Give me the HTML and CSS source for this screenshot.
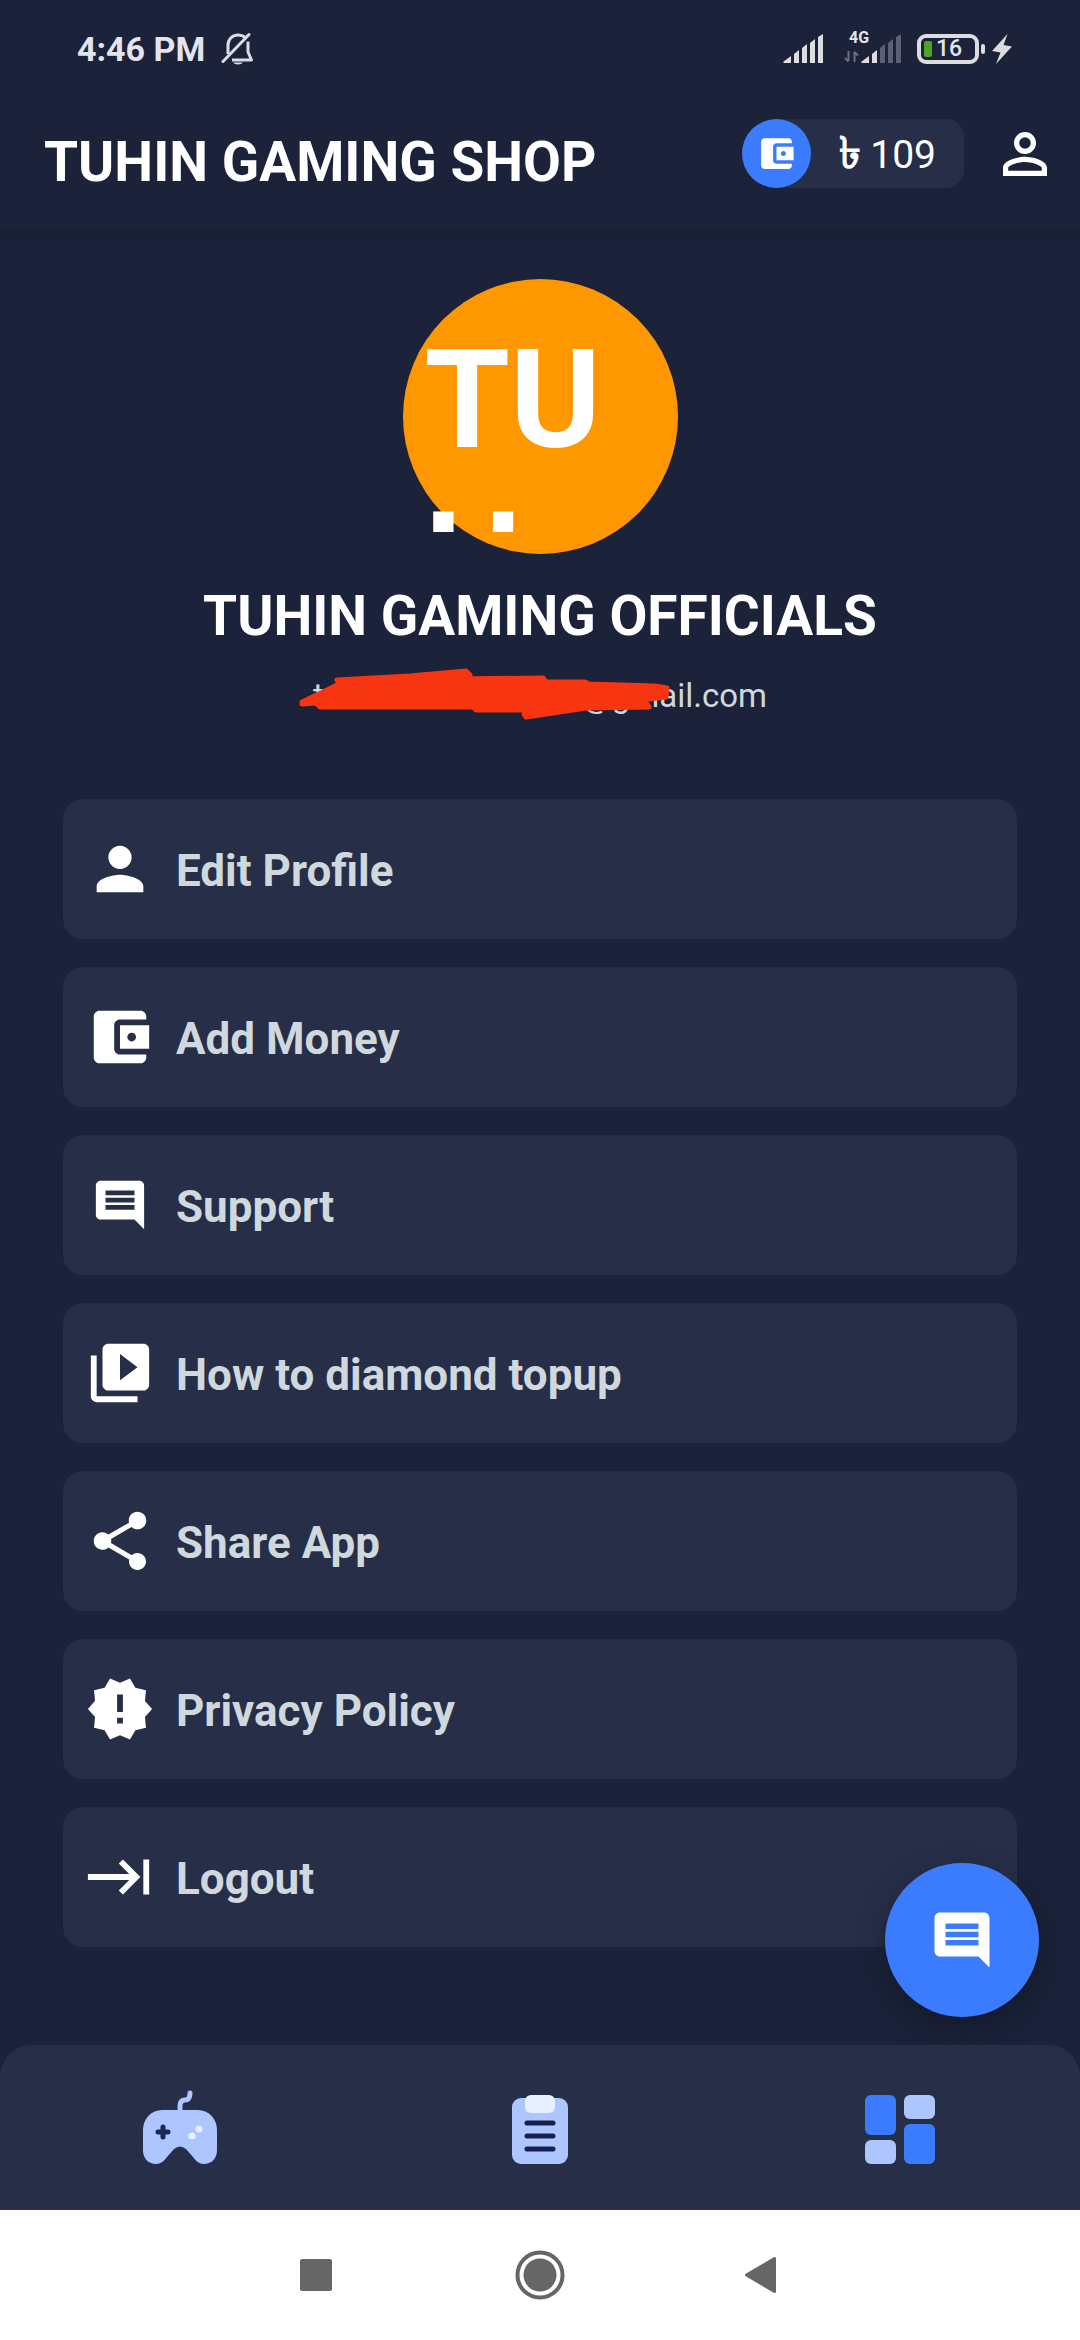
FILE: index.html
```html
<!DOCTYPE html>
<html lang="en">
<head>
<meta charset="utf-8">
<meta name="viewport" content="width=device-width, initial-scale=1">
<title>Tuhin Gaming Shop</title>
<link rel="stylesheet" href="styles.css">
</head>
<body>
<div class="status-bar">
  <div class="status-left">
    <span class="clock">4:46 PM</span>
    <svg class="bell" viewBox="0 0 34 34" aria-hidden="true">
      <path d="M7 22V13C7 7 11.500 3 17.500 3C20 3 22 3.700 24 5.200M27 9.500V20L30.500 28H11" fill="none" stroke="#dcdce6" stroke-width="3" stroke-linejoin="round"/>
      <path d="M2 29.500L28 2.500" stroke="#dcdce6" stroke-width="3" stroke-linecap="round"/>
      <path d="M12 30.500h10a5.500 3.500 0 0 1-10 0z" fill="#dcdce6"/>
    </svg>
  </div>
  <div class="status-right">
    <svg class="signal" viewBox="0 0 40 30" fill="#dcdce1" aria-hidden="true">
      <path d="M0 28l8-6v7H1zM11 20l5-4v13h-5zM19 14l5-4v19h-5zM27 9l5-4v24h-5zM35 3l5-3v29h-5z"/>
    </svg>
    <div class="mobile-data">
      <span class="network">4G</span>
      <svg class="data-signal" viewBox="0 0 58 30" aria-hidden="true">
        <path d="M4.500 17v10M1 24l3.500 3.500M10.500 28V18M14 21.500L10.500 18" fill="none" stroke="#6b7082" stroke-width="2"/>
        <path d="M17 28l8-6v7h-7zM28 20l5-4v13h-5z" fill="#dcdce1"/>
        <path d="M36 14l5-4v19h-5zM44 9l5-4v24h-5zM52 3l5-3v29h-5z" fill="#5b6074"/>
      </svg>
    </div>
    <div class="battery"><span class="charge"></span>16</div>
    <svg class="bolt" viewBox="0 0 20 30" fill="#dcdce1" aria-hidden="true"><path d="M15.500 0L0 17l8.500 1.500L4 30 20 12.500 11.500 11z"/></svg>
  </div>
</div>

<header class="app-bar">
  <h1 class="app-title">TUHIN GAMING SHOP</h1>
  <div class="app-actions">
    <a class="wallet" href="#wallet">
      <span class="wallet-icon">
        <svg viewBox="0 0 24 24" fill="#fff" aria-hidden="true"><path d="M21 18v1c0 1.100-.9 2-2 2H5c-1.110 0-2-.9-2-2V5c0-1.100.89-2 2-2h14c1.100 0 2 .9 2 2v1h-9c-1.110 0-2 .9-2 2v8c0 1.100.89 2 2 2h9zm-9-2h10V8H12v8zm4-2.500c-.83 0-1.500-.67-1.500-1.500s.67-1.500 1.500-1.500 1.500.67 1.500 1.500-.67 1.500-1.500 1.500z"/></svg>
      </span>
      <span class="balance"><span class="taka">৳</span> 109</span>
    </a>
    <button class="account" aria-label="Account">
      <svg viewBox="0 0 24 24" fill="#fff" aria-hidden="true"><path d="M12 5.900a2.100 2.100 0 1 1 0 4.200 2.100 2.100 0 0 1 0-4.200m0 9c2.970 0 6.100 1.460 6.100 2.100v1.100H5.900V17c0-.64 3.130-2.100 6.100-2.100M12 4a4 4 0 1 0 0 8 4 4 0 0 0 0-8zm0 9c-2.670 0-8 1.340-8 4v3h16v-3c0-2.660-5.330-4-8-4z"/></svg>
    </button>
  </div>
</header>

<main class="profile">
  <div class="avatar"><span class="initials">TUH</span></div>
  <h2 class="name">TUHIN GAMING OFFICIALS</h2>
  <div class="email">
    <span>tu</span><span class="email-hidden"></span><span>@gmail.com</span>
    <svg class="scribble" viewBox="0 0 380 60" aria-hidden="true">
      <path d="M7 37L26 28 44 19 42 15 115 11 171 6 175 10 160 14 248 13 251 17 290 17 294 19 360 21 372 23 371 32 346 35 352 39 354 42 291 43 231 52 229 49 231 45 181 45 178 42 25 42 21 38 7 39z" fill="#f73510" stroke="#f73510" stroke-width="5" stroke-linejoin="round"/>
    </svg>
  </div>

  <nav class="menu" aria-label="Profile">
    <a class="menu-item" href="#edit">
      <svg viewBox="0 0 24 24" aria-hidden="true"><path d="M12 12c2.210 0 4-1.790 4-4s-1.790-4-4-4-4 1.790-4 4 1.790 4 4 4zm0 2c-2.670 0-8 1.340-8 4v2h16v-2c0-2.660-5.330-4-8-4z"/></svg>
      <span class="label">Edit Profile</span></a>
    <a class="menu-item" href="#money">
      <svg viewBox="0 0 24 24" aria-hidden="true"><path d="M21 18v1c0 1.100-.9 2-2 2H5c-1.110 0-2-.9-2-2V5c0-1.100.89-2 2-2h14c1.100 0 2 .9 2 2v1h-9c-1.110 0-2 .9-2 2v8c0 1.100.89 2 2 2h9zm-9-2h10V8H12v8zm4-2.500c-.83 0-1.500-.67-1.500-1.500s.67-1.500 1.500-1.500 1.500.67 1.500 1.500-.67 1.500-1.500 1.500z"/></svg>
      <span class="label">Add Money</span></a>
    <a class="menu-item" href="#support">
      <svg viewBox="-2.500 -2.500 29 29" aria-hidden="true"><path d="M21.990 4c0-1.100-.89-2-1.990-2H4c-1.100 0-2 .9-2 2v12c0 1.100.9 2 2 2h14l4 4-.01-18zM18 14H6v-2h12v2zm0-3H6V9h12v2zm0-3H6V6h12v2z"/></svg>
      <span class="label">Support</span></a>
    <a class="menu-item" href="#howto">
      <svg viewBox="0 0 24 24" aria-hidden="true"><path d="M4 6H2v14c0 1.100.9 2 2 2h14v-2H4V6zm16-4H8c-1.100 0-2 .9-2 2v12c0 1.100.9 2 2 2h12c1.100 0 2-.9 2-2V4c0-1.100-.9-2-2-2zm-8 12.500v-9l6 4.500-6 4.500z"/></svg>
      <span class="label">How to diamond topup</span></a>
    <a class="menu-item" href="#share">
      <svg viewBox="0 0 24 24" aria-hidden="true"><path d="M18 16.080c-.76 0-1.440.3-1.960.77L8.910 12.700c.05-.23.09-.46.09-.7s-.04-.47-.09-.7l7.050-4.110c.54.5 1.250.81 2.040.81 1.660 0 3-1.340 3-3s-1.340-3-3-3-3 1.340-3 3c0 .24.04.47.09.7L8.040 9.810C7.500 9.310 6.790 9 6 9c-1.660 0-3 1.340-3 3s1.340 3 3 3c.79 0 1.500-.31 2.040-.81l7.120 4.160c-.05.21-.08.43-.08.65 0 1.610 1.310 2.920 2.920 2.920s2.920-1.310 2.920-2.920-1.310-2.920-2.920-2.920z"/></svg>
      <span class="label">Share App</span></a>
    <a class="menu-item" href="#privacy">
      <svg viewBox="0 0 24 24" aria-hidden="true"><path d="M23 12l-2.440-2.780.34-3.680-3.610-.82-1.890-3.180L12 3 8.600 1.540 6.710 4.720l-3.610.81.34 3.680L1 12l2.440 2.780-.34 3.690 3.610.82 1.890 3.180L12 21l3.400 1.460 1.890-3.180 3.610-.82-.34-3.680L23 12zm-10 5h-2v-2h2v2zm0-4h-2V7h2v6z"/></svg>
      <span class="label">Privacy Policy</span></a>
    <a class="menu-item" href="#logout">
      <svg viewBox="0 0 24 24" aria-hidden="true"><path d="M11.590 7.410L15.170 11H1v2h14.170l-3.590 3.590L13 18l6-6-6-6-1.410 1.410zM20 6v12h2V6h-2z"/></svg>
      <span class="label">Logout</span></a>
  </nav>
</main>

<div class="dock">
  <button class="chat" aria-label="Chat">
    <svg viewBox="0 0 24 24" fill="#fff" aria-hidden="true"><path d="M21.990 4c0-1.100-.89-2-1.990-2H4c-1.100 0-2 .9-2 2v12c0 1.100.9 2 2 2h14l4 4-.01-18zM18 14H6v-2h12v2zm0-3H6V9h12v2zm0-3H6V6h12v2z"/></svg>
  </button>
  <nav class="tabs" aria-label="Main">
    <a class="tab" href="#games" aria-label="Games">
      <svg viewBox="0 0 80 80" aria-hidden="true">
        <path d="M40 22V16C40 12 42 10 45 10C48.500 10 50 7 50 3" fill="none" stroke="#aec6ff" stroke-width="5" stroke-linecap="round"/>
        <path d="M22 20H58A19 20 0 0 1 77 40V60C77 69 71 74 64 74C59 74 56 71 53 67L46 59Q40 54 34 59L27 67C24 71 21 74 16 74C9 74 3 69 3 60V40A19 20 0 0 1 22 20z" fill="#aec6ff"/>
        <path d="M23 37V47M18 42H28" stroke="#182850" stroke-width="5" stroke-linecap="round"/>
        <circle cx="59" cy="39" r="3.500" fill="#e6eeff"/><circle cx="52" cy="46" r="3.500" fill="#e6eeff"/>
      </svg>
    </a>
    <a class="tab" href="#orders" aria-label="Orders">
      <svg viewBox="0 0 80 80" aria-hidden="true">
        <rect x="12" y="8" width="56" height="66" rx="9" fill="#aec6ff"/>
        <rect x="25" y="5" width="30" height="18" rx="6" fill="#e6eeff"/>
        <path d="M27 33H53M27 46H53M27 59H53" stroke="#152050" stroke-width="5" stroke-linecap="round"/>
      </svg>
    </a>
    <a class="tab" href="#dashboard" aria-label="Dashboard">
      <svg viewBox="0 0 80 80" aria-hidden="true">
        <rect x="5" y="5" width="31" height="40" rx="6" fill="#3b7cff"/>
        <rect x="5" y="50" width="31" height="24" rx="6" fill="#aec6ff"/>
        <rect x="44" y="5" width="31" height="24" rx="6" fill="#aec6ff"/>
        <rect x="44" y="34" width="31" height="40" rx="6" fill="#3b7cff"/>
      </svg>
    </a>
  </nav>
</div>

<div class="system-bar">
  <button class="system-key" aria-label="Recent apps"><svg viewBox="0 0 50 50" fill="#666" aria-hidden="true"><rect x="9" y="9" width="32" height="32" rx="2"/></svg></button>
  <button class="system-key" aria-label="Home"><svg viewBox="0 0 50 50" aria-hidden="true"><circle cx="25" cy="25" r="22.500" fill="none" stroke="#666" stroke-width="4"/><circle cx="25" cy="25" r="16.500" fill="#666"/></svg></button>
  <button class="system-key" aria-label="Back"><svg viewBox="0 0 50 50" fill="#666" stroke="#666" stroke-width="3" stroke-linejoin="round" aria-hidden="true"><path d="M7.500 25L35.500 8.500V41.500z"/></svg></button>
</div>
</body>
</html>
```
FILE: styles.css
```css
* {
  box-sizing: border-box;
}

body {
  margin: 0;
  min-height: 100vh;
  display: flex;
  flex-direction: column;
  background: #1b223a;
  color: #fff;
  font-family: Roboto, "Noto Sans", sans-serif;
}

svg {
  display: block;
}

a {
  color: inherit;
  text-decoration: none;
}

button {
  padding: 0;
  border: 0;
  background: none;
  cursor: pointer;
}

h1,
h2 {
  margin: 0;
}

/* Phone status bar */
.status-bar {
  display: flex;
  justify-content: space-between;
  align-items: center;
  height: 98px;
  padding: 0 68px 0 77px;
  color: #e4e4ec;
}

.status-left,
.status-right {
  display: flex;
  align-items: center;
}

.status-left {
  gap: 16px;
}

.clock {
  font-size: 34px;
  font-weight: 700;
}

.bell {
  width: 34px;
  height: 34px;
}

.signal {
  width: 40px;
  height: 30px;
}

.mobile-data {
  position: relative;
  margin: 0 15px 0 21px;
}

.network {
  position: absolute;
  top: -5px;
  left: 5px;
  font-size: 16px;
  font-weight: 700;
  line-height: 18px;
}

.data-signal {
  width: 58px;
  height: 30px;
}

.battery {
  position: relative;
  display: flex;
  align-items: center;
  gap: 4px;
  width: 62px;
  height: 30px;
  padding-left: 3px;
  border: 4px solid #dcdce1;
  border-radius: 9px;
  font-size: 23px;
  font-weight: 500;
  line-height: 22px;
}

.battery::after {
  content: "";
  position: absolute;
  left: 60px;
  top: 6px;
  width: 4px;
  height: 10px;
  border-radius: 2px;
  background: #dcdce1;
}

.charge {
  width: 8px;
  height: 16px;
  border-radius: 2px;
  background: #4ea524;
}

.bolt {
  width: 20px;
  height: 30px;
  margin-left: 13px;
}

/* App bar */
.app-bar {
  display: flex;
  justify-content: space-between;
  align-items: center;
  height: 131px;
  padding: 0 22px 0 44px;
  box-shadow: 0 8px 8px -4px rgba(22, 28, 44, 0.6);
}

.app-title {
  margin-bottom: 4px;
  font-size: 55px;
  font-weight: 700;
  line-height: 66px;
}

.app-actions {
  display: flex;
  align-items: center;
  gap: 28px;
  margin-bottom: 20px;
}

.wallet {
  display: flex;
  align-items: center;
  gap: 28px;
  height: 69px;
  padding-right: 28px;
  border-radius: 35px 18px 18px 35px;
  background: #272e48;
}

.wallet-icon {
  display: grid;
  place-items: center;
  width: 69px;
  height: 69px;
  border-radius: 50%;
  background: #3b7cff;
}

.wallet-icon svg {
  width: 41px;
  height: 41px;
}

.balance {
  font-size: 39px;
  line-height: 46px;
}

.taka {
  font-size: 44px;
  font-weight: 700;
}

.account svg {
  width: 66px;
  height: 66px;
}

/* Profile */
.profile {
  flex: 1;
  display: flex;
  flex-direction: column;
  align-items: center;
  padding: 50px 63px 98px;
}

.avatar {
  width: 275px;
  height: 275px;
  padding: 22px;
  border-radius: 50%;
  background: #ff9800;
}

.initials {
  display: block;
  height: 231px;
  padding-top: 18px;
  overflow: hidden;
  font-size: 138px;
  font-weight: 700;
  line-height: 162px;
  word-break: break-all;
}

.name {
  margin-top: 29px;
  font-size: 55px;
  font-weight: 700;
  line-height: 66px;
}

.email {
  position: relative;
  display: flex;
  margin-top: 27px;
  color: #cfd8dc;
  font-size: 33px;
  line-height: 40px;
}

.email-hidden {
  width: 240px;
}

.scribble {
  position: absolute;
  top: -11px;
  left: -18px;
  width: 380px;
  height: 60px;
}

.menu {
  display: flex;
  flex-direction: column;
  align-self: stretch;
  gap: 28px;
  margin-top: 83px;
}

.menu-item {
  display: flex;
  align-items: center;
  gap: 21px;
  height: 140px;
  padding: 0 22px;
  border-radius: 20px;
  background: #272e48;
  color: #cfd8dc;
  font-size: 44px;
  font-weight: 700;
  line-height: 52px;
}

.menu-item svg {
  width: 70px;
  height: 70px;
  fill: #fff;
}

.label {
  padding-top: 4px;
}

/* Bottom tabs and floating chat button */
.dock {
  position: relative;
}

.chat {
  position: absolute;
  right: 41px;
  bottom: 193px;
  display: grid;
  place-items: center;
  width: 154px;
  height: 154px;
  border-radius: 50%;
  background: #3b7cff;
  box-shadow: 0 12px 28px rgba(16, 22, 32, 0.6);
}

.chat svg {
  width: 66px;
  height: 66px;
}

.tabs {
  position: relative;
  display: grid;
  grid-template-columns: repeat(3, 1fr);
  justify-items: center;
  padding: 45px 0 40px;
  border-radius: 32px 32px 0 0;
  background: #272e48;
}

.tab svg {
  width: 80px;
  height: 80px;
}

/* System navigation */
.system-bar {
  display: flex;
  justify-content: center;
  align-items: center;
  gap: 174px;
  height: 130px;
  background: #fff;
}

.system-key svg {
  width: 50px;
  height: 50px;
}
```
